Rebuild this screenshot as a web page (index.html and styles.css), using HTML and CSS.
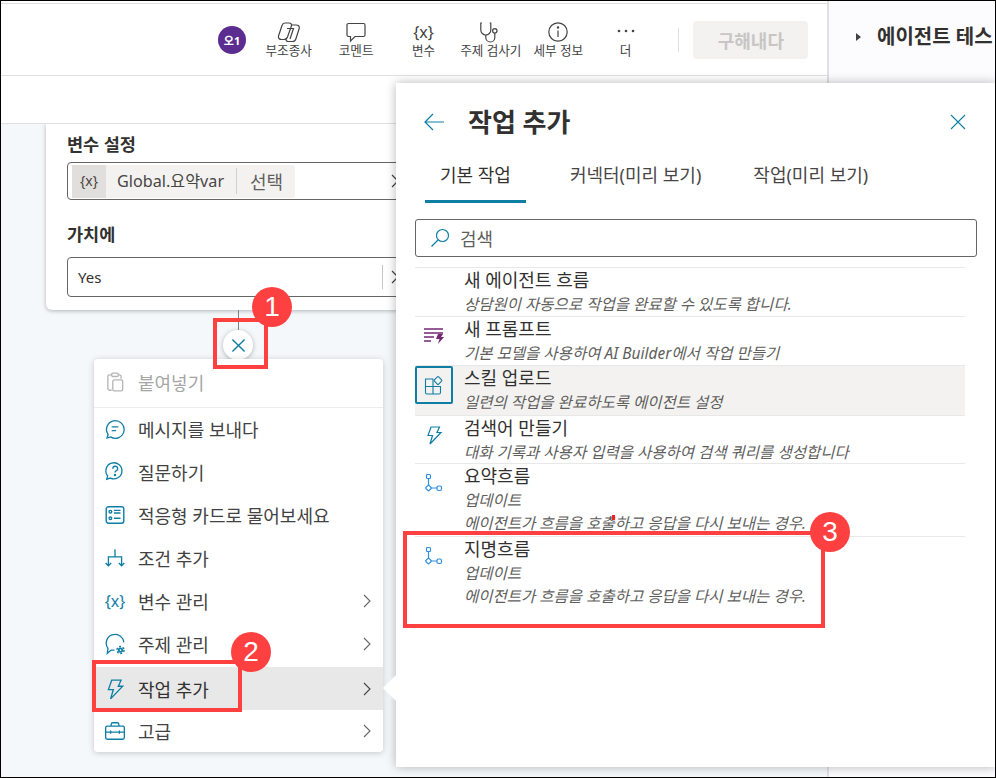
FILE: index.html
```html
<!DOCTYPE html>
<html lang="ko">
<head>
	<meta charset="UTF-8" />
	<title>작업 추가</title>
	<link rel="stylesheet" href="styles.css">
</head>
<body>
	<div class="frame">
		<div class="authoring">
			<header class="topbar">
				<span class="avatar">오1</span>
				<div class="tool">
					<svg class="tool-icon" viewBox="0 0 24 24" fill="none" stroke="#444" stroke-width="1.200"><path d="M8 3h4c2 0 3 1.500 2.400 3L10.500 17c-.6 1.500-2 2.500-3.500 2.500H4.500C2.300 19.500 1 18 1.500 16L5 5.500C5.500 4 6.500 3 8 3z"/><path d="M14 5h5c2.500 0 3.800 1.500 3.200 3.500L19 18.500c-.5 2-2 3-3.500 3h-4c-2 0-3-1.500-2.500-3"/><path d="M10 8.500h6.500L13 19"/></svg>
					<span class="tool-label">부조종사</span>
				</div>
				<div class="tool">
					<svg class="tool-icon" viewBox="0 0 24 24" fill="none" stroke="#444" stroke-width="1.200"><path d="M4.500 3.500h15a1.500 1.500 0 0 1 1.500 1.500v10a1.500 1.500 0 0 1-1.500 1.500H11l-4.500 4.500v-4.500h-2A1.500 1.500 0 0 1 3 15V5a1.500 1.500 0 0 1 1.500-1.500z"/></svg>
					<span class="tool-label">코멘트</span>
				</div>
				<div class="tool">
					<span class="tool-text">{x}</span>
					<span class="tool-label">변수</span>
				</div>
				<div class="tool">
					<svg class="tool-icon" viewBox="0 0 24 24" fill="none" stroke="#444" stroke-width="1.200"><path d="M3 3H1.800v7a5 5 0 0 0 10 0V3h-1.200"/><path d="M6.800 15v2.500a4.500 4.500 0 0 0 9 0V13"/><circle cx="15.800" cy="10.800" r="2.200"/></svg>
					<span class="tool-label">주제 검사기</span>
				</div>
				<div class="tool">
					<svg class="tool-icon" viewBox="0 0 24 24" fill="none" stroke="#444" stroke-width="1.200"><circle cx="12" cy="12" r="9.200"/><path d="M12 10.500v6.500"/><circle cx="12" cy="7.500" r=".6" fill="#444"/></svg>
					<span class="tool-label">세부 정보</span>
				</div>
				<div class="tool">
					<svg class="tool-icon" viewBox="0 0 24 24" fill="#444"><circle cx="5" cy="11" r="1.300"/><circle cx="12" cy="11" r="1.300"/><circle cx="19" cy="11" r="1.300"/></svg>
					<span class="tool-label">더</span>
				</div>
				<span class="topbar-sep"></span>
				<button class="save-btn">구해내다</button>
			</header>
			<div class="subbar"></div>
			<main class="canvas">
				<section class="card">
					<label class="field-label">변수 설정</label>
					<div class="field field-var">
						<span class="chip">
							<span class="chip-type">{x}</span>
							<span class="chip-name">Global.요약var</span>
							<span class="chip-pick">선택</span>
						</span>
						<svg class="field-chev" viewBox="0 0 10 16" fill="none" stroke="#444" stroke-width="1.200"><path d="M2 2l6 6-6 6"/></svg>
					</div>
					<label class="field-label field-label-2">가치에</label>
					<div class="field field-val">
						<span class="field-value">Yes</span>
						<span class="field-sep"></span>
						<svg class="field-chev" viewBox="0 0 10 16" fill="none" stroke="#444" stroke-width="1.200"><path d="M2 2l6 6-6 6"/></svg>
					</div>
				</section>
				<div class="connector"></div>
				<div class="add-btn">
					<svg viewBox="0 0 16 16" fill="none" stroke="#0f7ea5" stroke-width="1.500"><path d="M1.500 1.500l13 13M14.500 1.500l-13 13"/></svg>
				</div>
			</main>
		</div>
		<aside class="testpane">
			<span class="testpane-caret"></span>
			<span class="testpane-title">에이전트 테스</span>
		</aside>

		<!-- 노드 추가 메뉴 -->
		<nav class="menu">
			<div class="menu-item menu-disabled">
				<svg class="menu-icon" viewBox="0 0 20 20" fill="none" stroke="#b5b5b5" stroke-width="1.200"><path d="M7 3.500H5A1.500 1.500 0 0 0 3.500 5v11A1.500 1.500 0 0 0 5 17.500h2"/><path d="M13 3.500h1A1.500 1.500 0 0 1 15.500 5v2"/><rect x="7" y="2" width="6" height="3" rx="1"/><rect x="8" y="8" width="9" height="10" rx="1.500"/></svg>
				<span>붙여넣기</span>
			</div>
			<div class="menu-line"></div>
			<div class="menu-item">
				<svg class="menu-icon" viewBox="0 0 20 20" fill="none" stroke="#0f7ea5" stroke-width="1.200"><path d="M2.800 18.200l.9-3.200A8 8 0 1 1 6 17.200z"/><path d="M7 8h6M7 11.500h4"/></svg>
				<span>메시지를 보내다</span>
			</div>
			<div class="menu-item">
				<svg class="menu-icon" viewBox="0 0 20 20" fill="none" stroke="#0f7ea5" stroke-width="1.200"><path d="M2.500 16.500l.8-3A7.300 7.300 0 1 1 5.800 15.500z"/><path d="M8 7a2.200 2.200 0 1 1 3 2c-.7.4-1 .8-1 1.500"/><circle cx="10" cy="12.800" r=".5" fill="#0f7ea5"/></svg>
				<span>질문하기</span>
			</div>
			<div class="menu-item">
				<svg class="menu-icon" viewBox="0 0 20 20" fill="none" stroke="#0f7ea5" stroke-width="1.300"><rect x="2" y="2.500" width="16" height="15" rx="2"/><circle cx="5.800" cy="7" r="1.200"/><circle cx="5.800" cy="13" r="1.200"/><path d="M9 5.800h6M9 8.200h6M9 13h6"/></svg>
				<span>적응형 카드로 물어보세요</span>
			</div>
			<div class="menu-item">
				<svg class="menu-icon" viewBox="0 0 20 20" fill="none" stroke="#0f7ea5" stroke-width="1.200"><path d="M10 2v7M4 17V9h12v8M1.500 14.500L4 17l2.500-2.500M13.500 14.500L16 17l2.500-2.500"/></svg>
				<span>조건 추가</span>
			</div>
			<div class="menu-item">
				<span class="menu-icon menu-icon-text">{x}</span>
				<span>변수 관리</span>
				<svg class="menu-chev" viewBox="0 0 10 16" fill="none" stroke="#666" stroke-width="1.100"><path d="M2 2l6 6-6 6"/></svg>
			</div>
			<div class="menu-item">
				<svg class="menu-icon" viewBox="0 0 20 20" fill="none" stroke="#0f7ea5" stroke-width="1.200"><path d="M9.500 15.500H6.500l-3.500 3 .6-4.500A8 8 0 1 1 18 8.500"/><circle cx="15" cy="15.500" r="1.600" fill="none" stroke-width="1.600"/><circle cx="15" cy="15.500" r="3.200" fill="none" stroke-width="1.400" stroke-dasharray="1.800 1.550"/></svg>
				<span>주제 관리</span>
				<svg class="menu-chev" viewBox="0 0 10 16" fill="none" stroke="#666" stroke-width="1.100"><path d="M2 2l6 6-6 6"/></svg>
			</div>
			<div class="menu-item menu-active">
				<svg class="menu-icon" viewBox="0 0 20 20" fill="none" stroke="#0f7ea5" stroke-width="1.200"><path d="M7 2h8.500l-2.500 5.500h4L6 19l2.500-8.500H4z"/></svg>
				<span>작업 추가</span>
				<svg class="menu-chev" viewBox="0 0 10 16" fill="none" stroke="#444" stroke-width="1.100"><path d="M2 2l6 6-6 6"/></svg>
			</div>
			<div class="menu-item">
				<svg class="menu-icon" viewBox="0 0 20 20" fill="none" stroke="#0f7ea5" stroke-width="1.200"><rect x="1.500" y="5.500" width="17" height="12" rx="1.500"/><path d="M6.500 5.500V4A1.500 1.500 0 0 1 8 2.500h4A1.500 1.500 0 0 1 13.500 4v1.500M1.500 11h17M6 9.500v3M14 9.500v3"/></svg>
				<span>고급</span>
				<svg class="menu-chev" viewBox="0 0 10 16" fill="none" stroke="#666" stroke-width="1.100"><path d="M2 2l6 6-6 6"/></svg>
			</div>
		</nav>

		<!-- 작업 추가 패널 -->
		<section class="panel">
			<span class="panel-notch"></span>
			<div class="panel-head">
				<svg class="panel-back" viewBox="0 0 20 18" fill="none" stroke="#0f7ea5" stroke-width="1.200"><path d="M20 9H1M9 1L1 9l8 8"/></svg>
				<h2 class="panel-title">작업 추가</h2>
				<svg class="panel-close" viewBox="0 0 16 16" fill="none" stroke="#0f7ea5" stroke-width="1.100"><path d="M1 1l14 14M15 1L1 15"/></svg>
			</div>
			<div class="tabs">
				<span class="tab tab-on">기본 작업</span>
				<span class="tab">커넥터(미리 보기)</span>
				<span class="tab">작업(미리 보기)</span>
			</div>
			<div class="search">
				<svg viewBox="0 0 20 20" fill="none" stroke="#0f7ea5" stroke-width="1.200"><circle cx="12.500" cy="7.500" r="6"/><path d="M8 12L1.500 18.500"/></svg>
				<span>검색</span>
			</div>
			<div class="list">
				<div class="row">
					<span class="row-icon"></span>
					<div class="row-text">
						<div class="row-title">새 에이전트 흐름</div>
						<div class="row-sub">상담원이 자동으로 작업을 완료할 수 있도록 합니다.</div>
					</div>
				</div>
				<div class="row">
					<span class="row-icon">
						<svg viewBox="0 0 20 20" fill="none" stroke="#742774" stroke-width="1.400"><path d="M0 3h19M0 7h19M0 11h10M0 15h7"/><path d="M14 8h5l-2 3h3l-6 7 1.500-5H12z" fill="#742774" stroke="none"/></svg>
					</span>
					<div class="row-text">
						<div class="row-title">새 프롬프트</div>
						<div class="row-sub">기본 모델을 사용하여 AI Builder에서 작업 만들기</div>
					</div>
				</div>
				<div class="row row-on">
					<span class="row-icon row-icon-box">
						<svg viewBox="0 0 20 20" fill="none" stroke="#0f7ea5" stroke-width="1.100"><path d="M1.500 4h7.500v7.500H1.500zM1.500 11.500h7.500V19H3a1.500 1.500 0 0 1-1.500-1.500zM9 11.500h7.500V17.500A1.500 1.500 0 0 1 15 19H9z"/><rect x="11" y="2.500" width="6" height="6" rx="1" transform="rotate(45 14 5.500)"/></svg>
					</span>
					<div class="row-text">
						<div class="row-title">스킬 업로드</div>
						<div class="row-sub">일련의 작업을 완료하도록 에이전트 설정</div>
					</div>
				</div>
				<div class="row row-short">
					<span class="row-icon">
						<svg viewBox="0 0 20 20" fill="none" stroke="#0f7ea5" stroke-width="1.200"><path d="M7 2h8.500l-2.500 5.500h4L6 19l2.500-8.500H4z"/></svg>
					</span>
					<div class="row-text">
						<div class="row-title">검색어 만들기</div>
						<div class="row-sub">대화 기록과 사용자 입력을 사용하여 검색 쿼리를 생성합니다</div>
					</div>
				</div>
				<div class="row row-tall">
					<span class="row-icon">
						<svg viewBox="0 0 20 20" fill="none" stroke="#2f8fe0" stroke-width="1.200"><rect x="2.500" y="1.500" width="4" height="4" rx="1"/><path d="M4.500 5.500v7M7 15h6"/><rect x="2.300" y="12.800" width="4.400" height="4.400" rx="1" transform="rotate(45 4.500 15)"/><rect x="13" y="13" width="4.500" height="4.500" rx="1.500"/></svg>
					</span>
					<div class="row-text">
						<div class="row-title">요약흐름</div>
						<div class="row-sub">업데이트</div>
						<div class="row-sub">에이전트가 흐름을 호출하고 응답을 다시 보내는 경우.</div>
					</div>
				</div>
				<div class="row row-tall row-last">
					<span class="row-icon">
						<svg viewBox="0 0 20 20" fill="none" stroke="#2f8fe0" stroke-width="1.200"><rect x="2.500" y="1.500" width="4" height="4" rx="1"/><path d="M4.500 5.500v7M7 15h6"/><rect x="2.300" y="12.800" width="4.400" height="4.400" rx="1" transform="rotate(45 4.500 15)"/><rect x="13" y="13" width="4.500" height="4.500" rx="1.500"/></svg>
					</span>
					<div class="row-text">
						<div class="row-title">지명흐름</div>
						<div class="row-sub">업데이트</div>
						<div class="row-sub">에이전트가 흐름을 호출하고 응답을 다시 보내는 경우.</div>
					</div>
				</div>
			</div>
		</section>

		<!-- 빨간 표시 -->
		<span class="mark mark-1"></span>
		<span class="mark mark-2"></span>
		<span class="mark mark-3"></span>
		<span class="badge badge-1">1</span>
		<span class="badge badge-2">2</span>
		<span class="badge badge-3">3</span>
		<span class="tick"></span>
	</div>
</body>
</html>
```

FILE: styles.css
```css
* {
	box-sizing: border-box;
}

body {
	margin: 0;
	background: #fff;
	color: #323130;
	font-family: "Noto Sans", "Noto Sans CJK KR", sans-serif;
}

.frame {
	position: relative;
	display: flex;
	width: 996px;
	height: 778px;
	border: 1px solid #000;
	overflow: hidden;
	background: #fff;
}

.authoring {
	display: flex;
	flex-direction: column;
	width: 826px;
	padding-top: 2px;
}

.topbar {
	display: flex;
	align-items: center;
	flex: none;
	height: 73px;
	padding: 0 20px 0 217px;
	border-top: 1px solid #e0e0e0;
	border-bottom: 1px solid #e0e0e0;
}

.avatar {
	display: flex;
	align-items: center;
	justify-content: center;
	flex: none;
	width: 28px;
	height: 28px;
	margin-right: 9px;
	border-radius: 50%;
	background: #5c2d91;
	color: #fff;
	font-size: 11px;
	font-weight: 700;
}

.tool {
	display: flex;
	flex-direction: column;
	align-items: center;
	flex: none;
	width: 67.400px;
	font-size: 12.600px;
	line-height: 16px;
	color: #424242;
	white-space: nowrap;
}

.tool-icon {
	width: 24px;
	height: 24px;
}

.tool-text {
	height: 24px;
	font-size: 16px;
	line-height: 24px;
}

.tool-label {
	margin-top: -1px;
}

.topbar-sep {
	flex: none;
	width: 1px;
	height: 24px;
	margin: 0 14px 0 19px;
	background: #e0e0e0;
}

.save-btn {
	flex: none;
	width: 115px;
	height: 38px;
	padding: 0;
	border: none;
	border-radius: 4px;
	background: #f3f2f1;
	color: #c8c6c4;
	font: 700 18px "Noto Sans", "Noto Sans CJK KR", sans-serif;
}

.subbar {
	flex: none;
	height: 48px;
	border-bottom: 1px solid #e0e0e0;
}

.canvas {
	position: relative;
	flex: 1;
	background: #f5f8fb;
	overflow: hidden;
}

.card {
	position: absolute;
	left: 45px;
	top: 0;
	width: 500px;
	height: 186px;
	padding: 8px 21px;
	border-radius: 0 0 6px 6px;
	background: #fff;
	box-shadow: 0 1px 4px rgba(0, 0, 0, 0.28);
}

.field-label {
	display: block;
	font-size: 17.500px;
	font-weight: 700;
	line-height: 24px;
	color: #323130;
}

.field-label-2 {
	margin-top: 22px;
}

.field {
	position: relative;
	display: flex;
	align-items: center;
	border: 1px solid #666;
	border-radius: 4px;
}

.field-var {
	height: 38px;
	margin-top: 6px;
	padding-left: 4px;
}

.field-val {
	height: 40px;
	margin-top: 11px;
	padding-left: 10px;
}

.chip {
	display: flex;
	align-items: center;
	height: 33px;
	border-radius: 2px;
	background: #f3f2f1;
	font-size: 16.200px;
	color: #484644;
}

.chip-type {
	width: 34px;
	height: 33px;
	background: #e1dfdd;
	font-size: 14px;
	line-height: 31px;
	text-align: center;
}

.chip-name {
	width: 131px;
	padding: 0 0 0 11px;
	border-right: 1px solid #d2d0ce;
	line-height: 26px;
	white-space: nowrap;
}

.chip-pick {
	width: 58px;
	padding-left: 13px;
	font-size: 18px;
	color: #605e5c;
}

.field-chev {
	position: absolute;
	left: 322px;
	width: 10px;
	height: 16px;
}

.field-value {
	width: 304px;
	font-size: 15px;
	color: #323130;
}

.field-sep {
	width: 1px;
	height: 24px;
	background: #c8c6c4;
}

.connector {
	position: absolute;
	left: 237px;
	top: 186px;
	width: 1px;
	height: 20px;
	background: #808080;
}

.add-btn {
	position: absolute;
	left: 222px;
	top: 206px;
	display: flex;
	align-items: center;
	justify-content: center;
	width: 30px;
	height: 30px;
	border-radius: 50%;
	background: #fff;
	box-shadow: 0 1px 5px rgba(0, 0, 0, 0.28);
}

.add-btn svg {
	width: 15px;
	height: 15px;
}

.testpane {
	display: flex;
	align-items: flex-start;
	flex: 1;
	padding: 24px 0 0 27px;
	border-left: 2px solid #e0e0e0;
	background: #fcfcfe;
	white-space: nowrap;
	overflow: hidden;
}

.testpane-caret {
	flex: none;
	width: 0;
	height: 0;
	margin: 8px 16px 0 0;
	border-top: 4px solid transparent;
	border-bottom: 4px solid transparent;
	border-left: 5px solid #424242;
}

.testpane-title {
	font-size: 20px;
	font-weight: 700;
	line-height: 24px;
	color: #323130;
}

.menu {
	position: absolute;
	left: 93px;
	top: 358px;
	width: 289px;
	height: 393px;
	border-radius: 4px;
	background: #fff;
	box-shadow: 0 1px 6px rgba(0, 0, 0, 0.2);
	overflow: hidden;
}

.menu-item {
	display: flex;
	align-items: center;
	height: 43px;
	padding: 0 11px 2px 10px;
	font-size: 18px;
	color: #424242;
	white-space: nowrap;
}

.menu-item:first-child {
	height: 48px;
}

.menu-disabled {
	color: #a6a6a6;
}

.menu-active {
	margin-top: 1px;
	padding-bottom: 0;
	background: #e8e8e8;
	color: #323130;
}

.menu-line {
	height: 1px;
	background: #ededed;
}

.menu-icon {
	flex: none;
	width: 22px;
	height: 22px;
	margin-right: 12px;
}

.menu-icon-text {
	color: #0f7ea5;
	font-size: 16px;
	line-height: 22px;
	text-align: center;
}

.menu-chev {
	flex: none;
	width: 10px;
	height: 16px;
	margin-left: auto;
}

.panel {
	position: absolute;
	left: 395px;
	top: 82px;
	width: 600px;
	height: 684px;
	padding-left: 19px;
	background: #fff;
	box-shadow: 0 0 10px rgba(0, 0, 0, 0.28);
}

.panel-notch {
	position: absolute;
	left: -13px;
	top: 592px;
	width: 0;
	height: 0;
	border-top: 13px solid transparent;
	border-bottom: 13px solid transparent;
	border-right: 13px solid #fff;
}

.panel-head {
	display: flex;
	align-items: center;
	width: 551px;
	height: 78px;
	padding-left: 9px;
}

.panel-back {
	flex: none;
	width: 20px;
	height: 18px;
	margin-top: -1px;
}

.panel-title {
	margin: -3px 0 0 24px;
	font-size: 26px;
	font-weight: 700;
}

.panel-close {
	flex: none;
	width: 16px;
	height: 16px;
	margin-left: auto;
}

.tabs {
	display: flex;
	height: 42px;
	padding-left: 10px;
}

.tab {
	padding: 2px 15px 0;
	margin-right: 22px;
	font-size: 18px;
	line-height: 24px;
	color: #484644;
	white-space: nowrap;
}

.tab-on {
	margin-right: 29px;
	border-bottom: 3px solid #0f7ea5;
	color: #323130;
}

.search {
	display: flex;
	align-items: center;
	width: 562px;
	height: 38px;
	margin-top: 16px;
	padding-left: 14px;
	border: 1px solid #666;
	border-radius: 3px;
	font-size: 18px;
	color: #605e5c;
}

.search svg {
	width: 20px;
	height: 20px;
	margin-right: 10px;
}

.list {
	width: 550px;
	margin-top: 10px;
}

.row {
	display: flex;
	height: 49px;
	border-top: 1px solid #e8e8e8;
}

.row-short {
	height: 48px;
}

.row-tall {
	height: 73px;
}

.row-last {
	height: auto;
}

.row-on {
	height: 50px;
	background: #f3f2f1;
}

.row-icon {
	display: flex;
	align-items: center;
	justify-content: center;
	flex: none;
	width: 38px;
	height: 38px;
	margin-right: 11px;
}

.row-icon svg {
	width: 20px;
	height: 20px;
}

.row-icon-box {
	border: 2px solid #0f7ea5;
	border-radius: 2px;
}

.row-title {
	height: 25px;
	font-size: 18px;
	line-height: 25px;
	color: #323130;
}

.row-sub {
	height: 23px;
	font-size: 15.500px;
	font-style: italic;
	line-height: 23px;
	color: #605e5c;
	white-space: nowrap;
}

.mark {
	position: absolute;
	border: 4px solid #ff4040;
}

.mark-1 {
	left: 212px;
	top: 317px;
	width: 55px;
	height: 51px;
}

.mark-2 {
	left: 91px;
	top: 659px;
	width: 150px;
	height: 52px;
}

.mark-3 {
	left: 402px;
	top: 530px;
	width: 422px;
	height: 97px;
}

.badge {
	position: absolute;
	width: 40px;
	height: 40px;
	border-radius: 50%;
	background: #ff4040;
	color: #fff;
	font-family: "Liberation Sans", sans-serif;
	font-size: 28px;
	line-height: 40px;
	text-align: center;
}

.badge-1 {
	left: 251px;
	top: 286px;
}

.badge-2 {
	left: 230px;
	top: 631px;
}

.badge-3 {
	left: 809px;
	top: 511px;
}

.tick {
	position: absolute;
	left: 611px;
	top: 514px;
	width: 3px;
	height: 5px;
	background: #ff2020;
}
```
